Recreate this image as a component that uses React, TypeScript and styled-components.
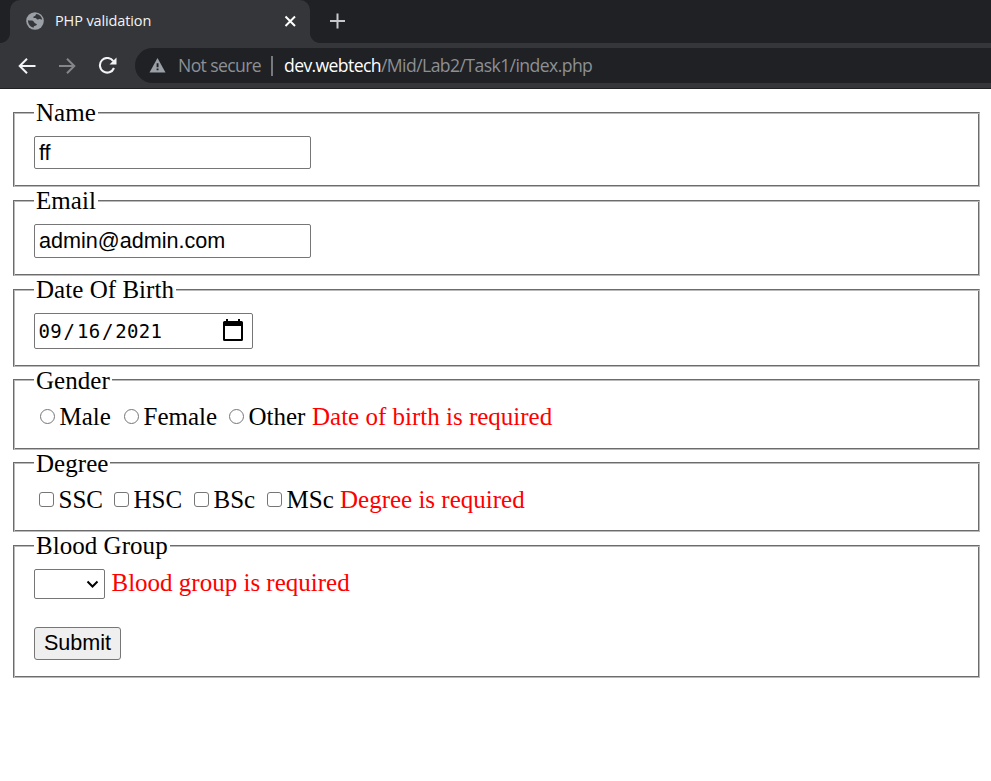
import React from "react";
import styled, { createGlobalStyle } from "styled-components";

const GlobalStyle = createGlobalStyle`
  * { box-sizing: border-box; }
  html, body { margin: 0; padding: 0; background: #fff; }
  body { overflow: hidden; }
`;

const Page = styled.div`
  width: 991px;
  height: 781px;
  overflow: hidden;
  background: #fff;
  color: #000;
  font-family: "Liberation Serif", serif;
  font-size: 25px;
  line-height: 28px;
`;

const TabStrip = styled.div`
  display: flex;
  height: 43px;
  padding-left: 10px;
  background: #202124;
`;

const Tab = styled.div`
  position: relative;
  display: flex;
  align-items: center;
  width: 300px;
  height: 43px;
  padding: 0 13px 1px 16px;
  border-radius: 10px 10px 0 0;
  background: #35363a;
  &::before,
  &::after {
    content: "";
    position: absolute;
    bottom: 0;
    width: 10px;
    height: 10px;
  }
  &::before {
    left: -10px;
    background: radial-gradient(circle at 0 0, #202124 9.5px, #35363a 10.5px);
  }
  &::after {
    right: -10px;
    background: radial-gradient(circle at 100% 0, #202124 9.5px, #35363a 10.5px);
  }
`;

const TabTitle = styled.span`
  flex: 1;
  margin-left: 11px;
  color: #f1f3f4;
  font: 14.5px/20px "Open Sans", sans-serif;
  letter-spacing: -0.12px;
  white-space: nowrap;
`;

const NewTab = styled.div`
  display: flex;
  align-items: center;
  margin-left: 20px;
  padding-bottom: 1px;
`;

const Toolbar = styled.div`
  display: flex;
  align-items: center;
  height: 46px;
  padding-left: 18px;
  border-bottom: 1px solid #202124;
  background: #35363a;
`;

const NavIcon = styled.div`
  display: flex;
  flex: none;
  width: 40px;
`;

const AddressBar = styled.div`
  display: flex;
  align-items: center;
  flex: 1;
  height: 35px;
  margin-left: -3px;
  padding: 0 0 0 14px;
  border-radius: 18px 0 0 18px;
  background: #202124;
  color: #9aa0a6;
  font: 17.6px/24px "Open Sans", sans-serif;
  white-space: nowrap;
`;

const Security = styled.span`
  width: 84px;
  margin: -1px 0 0 12px;
  color: #8c9095;
  letter-spacing: -0.62px;
`;

const Divider = styled.span`
  width: 2px;
  height: 20px;
  margin: 0 11px 0 9px;
  background: #76797d;
`;

const Host = styled.span`
  width: 97px;
  margin-top: -1px;
  color: #fff;
  letter-spacing: -0.62px;
`;

const Path = styled.span`
  margin-top: -1px;
  color: #8c9095;
  letter-spacing: -0.58px;
`;

const Form = styled.form`
  display: flex;
  flex-direction: column;
  padding: 23px 11px 0 13px;
`;

const Group = styled.section<{ $height: number; $gap?: number }>`
  height: ${(p) => p.$height}px;
  margin-bottom: ${(p) => p.$gap ?? 13}px;
  padding-left: 20px;
  border: 1px solid;
  border-color: #6c6c6c #bababa #bababa #6c6c6c;
  box-shadow: inset 1px 1px #bababa, inset -1px -1px #6c6c6c;
`;

const Legend = styled.div<{ $drop?: number }>`
  width: fit-content;
  height: 28px;
  margin-top: ${(p) => -14 + (p.$drop ?? 0)}px;
  padding: 0 2px;
  background: linear-gradient(#fff, #fff) 0 50% / 100% 8px no-repeat;
  letter-spacing: 0.04px;
  white-space: nowrap;
`;

const TextField = styled.input<{ $height: number }>`
  display: block;
  width: 277px;
  height: ${(p) => p.$height}px;
  margin-top: 9px;
  padding: 0 4px;
  border: 1px solid #767676;
  border-radius: 2px;
  outline: none;
  background: #fff;
  color: #000;
  font: 21.6px "Liberation Sans", sans-serif;
`;

const DateField = styled.div`
  display: flex;
  align-items: center;
  width: 219px;
  height: 36px;
  margin-top: 9px;
  padding: 0 9px 0 3.5px;
  border: 1px solid #767676;
  border-radius: 2px;
  font: 19px/24px "DejaVu Sans Mono", monospace;
  letter-spacing: 0.35px;
`;

const Slash = styled.span`
  padding: 0 1.5px;
`;

const CalendarSlot = styled.span`
  display: flex;
  margin: -1px 0 0 auto;
`;

const OptionRow = styled.div<{ $top: number; $indent: number }>`
  display: flex;
  align-items: center;
  height: 28px;
  margin-top: ${(p) => p.$top}px;
  padding-left: ${(p) => p.$indent}px;
  white-space: nowrap;
`;

const Option = styled.label<{ $width: number }>`
  display: flex;
  align-items: center;
  gap: 4.5px;
  width: ${(p) => p.$width}px;
`;

const Choice = styled.input`
  appearance: none;
  flex: none;
  width: 15px;
  height: 15px;
  margin: -2px 0 0;
  border: 1px solid #767676;
  border-radius: ${(p) => (p.type === "radio" ? "50%" : "3px")};
  background: #fff;
`;

const Message = styled.span`
  color: #f00;
`;

const SelectRow = styled.div`
  display: flex;
  align-items: center;
  gap: 6.5px;
  height: 30px;
  margin-top: 9px;
  white-space: nowrap;
  ${Message} {
    margin-top: -2px;
  }
`;

const SelectBox = styled.div`
  display: flex;
  align-items: center;
  justify-content: flex-end;
  width: 71px;
  height: 30px;
  padding-right: 5px;
  border: 1px solid #767676;
  border-radius: 2px;
`;

const Submit = styled.button`
  display: block;
  width: 87px;
  height: 33px;
  margin-top: 28px;
  padding: 0 0 1px;
  border: 1px solid #767676;
  border-radius: 3px;
  background: #efefef;
  color: #000;
  font: 21.6px "Liberation Sans", sans-serif;
`;

const Globe = () => (
  <svg width="18" height="18" viewBox="0 0 18 18">
    <circle cx="9" cy="9" r="8.8" fill="#9aa0a6" />
    <path
      d="M10.800 2.100C9.500 2.300 9.900 3.500 9 4 8.200 4.400 7.300 4.300 7.300 5.200c0 .9 1.100.8 2 .9 1.300.1 1.100 1.400 2.200 1.500 1 .1 1.300-.6 2.500-.5 1 .1 1.600.8 2.200.6-.3-2.700-2.500-5.200-5.400-5.600zM2 8.300c-.2 3.500 2.200 6.800 5.700 7.500-.1-.9 0-1.600.8-1.900.9-.4 2-.1 2.300-1.200.2-.9-.5-1.100-1.300-1.300-1.400-.3-1.300-1.900-2.500-2.500C5.600 8.200 3.600 9 2 8.300z"
      fill="#35363a"
    />
  </svg>
);

const Arrow = ({ forward = false }: { forward?: boolean }) => (
  <svg width="18" height="18" viewBox="0 0 18 18" fill="none" stroke={forward ? "#85868a" : "#f1f3f4"} strokeWidth="2">
    <path d={forward ? "M1 9h15M9 1.700l7.300 7.300L9 16.300" : "M17.500 9H2M9 1.700L1.700 9 9 16.300"} />
  </svg>
);

const Reload = () => (
  <svg width="20" height="18" viewBox="0 0 20 18">
    <path d="M15.300 4.200A7.300 7.300 0 1 0 16 11" fill="none" stroke="#f1f3f4" strokeWidth="2.100" />
    <path d="M18.500 .5v7h-7z" fill="#f1f3f4" />
  </svg>
);

const Warning = () => (
  <svg width="17" height="15" viewBox="0 0 17 15">
    <path d="M8.500 0 16.500 14.500H.5z" fill="#9aa0a6" />
    <path d="M7.600 5.300h1.900v4H7.600zm0 5.200h1.900v1.800H7.600z" fill="#202124" />
  </svg>
);

const Calendar = () => (
  <svg width="20" height="23" viewBox="0 0 20 23">
    <path
      fillRule="evenodd"
      d="M3 0h2v2h10V0h2v2h1.500q1.500 0 1.500 1.500v17q0 1.500-1.500 1.500h-17Q0 22 0 20.500v-17Q0 2 1.500 2H3zM2 7v13h16V7z"
    />
  </svg>
);

const genders = [
  { label: "Male", width: 84 },
  { label: "Female", width: 105 },
  { label: "Other", width: 83 },
];

const degrees = [
  { label: "SSC", width: 75 },
  { label: "HSC", width: 80 },
  { label: "BSc", width: 73 },
  { label: "MSc", width: 73 },
];

export default function App() {
  return (
    <Page>
      <GlobalStyle />
      <TabStrip>
        <Tab>
          <Globe />
          <TabTitle>PHP validation</TabTitle>
          <svg width="13" height="13" viewBox="0 0 13 13" stroke="#fff" strokeWidth="2">
            <path d="M1.500 1.500l9.500 9.500M11 1.500L1.500 11" />
          </svg>
        </Tab>
        <NewTab>
          <svg width="16" height="16" viewBox="0 0 16 16" stroke="#c6c8cb" strokeWidth="2">
            <path d="M7.500 .5v15M0 8h15" />
          </svg>
        </NewTab>
      </TabStrip>
      <Toolbar>
        <NavIcon><Arrow /></NavIcon>
        <NavIcon><Arrow forward /></NavIcon>
        <NavIcon><Reload /></NavIcon>
        <AddressBar>
          <Warning />
          <Security>Not secure</Security>
          <Divider />
          <Host>dev.webtech</Host>
          <Path>/Mid/Lab2/Task1/index.php</Path>
        </AddressBar>
      </Toolbar>
      <Form>
        <Group $height={75}>
          <Legend>Name</Legend>
          <TextField $height={33} defaultValue="ff" />
        </Group>
        <Group $height={76}>
          <Legend>Email</Legend>
          <TextField $height={34} defaultValue="admin@admin.com" />
        </Group>
        <Group $height={78} $gap={12}>
          <Legend>Date Of Birth</Legend>
          <DateField>
            09<Slash>/</Slash>16<Slash>/</Slash>2021
            <CalendarSlot><Calendar /></CalendarSlot>
          </DateField>
        </Group>
        <Group $height={71} $gap={12}>
          <Legend $drop={1}>Gender</Legend>
          <OptionRow $top={8} $indent={6}>
            {genders.map((g) => (
              <Option key={g.label} $width={g.width}>
                <Choice type="radio" name="gender" />
                {g.label}
              </Option>
            ))}
            <Message>Date of birth is required</Message>
          </OptionRow>
        </Group>
        <Group $height={70}>
          <Legend $drop={1}>Degree</Legend>
          <OptionRow $top={8} $indent={5}>
            {degrees.map((d) => (
              <Option key={d.label} $width={d.width}>
                <Choice type="checkbox" />
                {d.label}
              </Option>
            ))}
            <Message>Degree is required</Message>
          </OptionRow>
        </Group>
        <Group $height={133}>
          <Legend>Blood Group</Legend>
          <SelectRow>
            <SelectBox>
              <svg width="14" height="10" viewBox="0 0 14 10" fill="none" stroke="#000" strokeWidth="2">
                <path d="M2.500 2.500L7.500 7.500 12.500 2.500" />
              </svg>
            </SelectBox>
            <Message>Blood group is required</Message>
          </SelectRow>
          <Submit type="button">Submit</Submit>
        </Group>
      </Form>
    </Page>
  );
}
